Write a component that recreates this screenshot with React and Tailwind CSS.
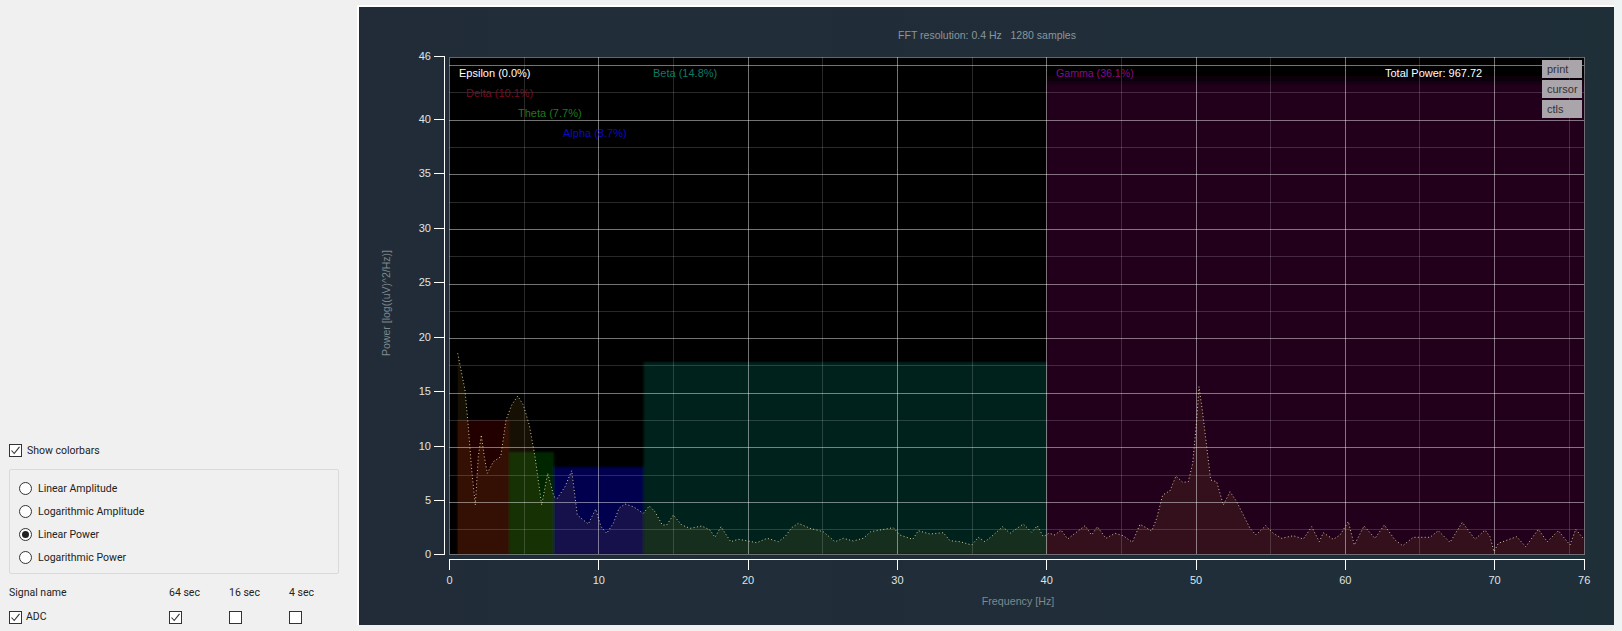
import React from 'react';

// curve samples read off the plot, as x,y pairs in page pixels
const fromCrop = (ox, oy, pts) => pts.map(([x, y]) => [ox + x / 3, oy + y / 3]);

const curve = [
  ...fromCrop(370, 340, [[263,40],[285,150],[295,260],[305,390],[316,495],[325,350],[334,285],[343,350],[352,400],[370,365],[392,350],[408,240],[425,195],[443,168],[460,195],[478,255],[495,350],[515,495],[533,400],[552,470],[562,475],[585,440],[605,392],[622,525],[640,540],[655,552],[677,507],[693,560],[710,580],[730,550],[747,505],[765,492],[790,500],[820,520],[838,498],[855,515],[877,555]]),
  ...fromCrop(660, 480, [[20,135],[40,105],[65,135],[90,145],[125,138],[150,150],[165,172],[183,140],[212,185],[235,178],[260,182],[290,188],[322,175],[355,185],[375,170],[395,143],[415,130],[450,145],[490,155],[525,185],[550,175],[580,183],[610,175],[632,155],[660,150],[700,143],[720,165],[758,178],[775,152],[810,162],[850,158],[870,182],[900,185],[935,195],[955,172],[975,185],[1000,165],[1028,140]]),
  ...fromCrop(1000, 370, [[30,490],[70,462],[95,487],[112,467],[130,500],[147,490],[165,495],[183,480],[203,507],[225,490],[255,467],[275,495],[292,470],[318,505],[345,490],[370,497],[397,517],[420,463],[455,483],[470,445],[488,375],[510,362],[528,318],[548,337],[565,335],[578,280],[590,150],[597,50],[607,120],[620,230],[632,330],[650,335],[670,405],[690,365],[710,395],[750,475],[768,495],[797,467],[820,490],[845,505],[880,497]]),
  ...fromCrop(1290, 480, [[40,177],[65,140],[88,185],[100,158],[130,178],[150,165],[175,125],[193,195],[222,138],[255,175],[283,135],[315,180],[338,197],[370,172],[420,172],[445,152],[480,187],[517,127],[555,178],[585,150],[600,170],[612,215],[625,190],[680,170],[707,200],[745,148],[772,185],[805,152],[840,195],[857,148],[882,178]]),
];

const linePts = curve.map((p) => p.map((n) => n.toFixed(1)).join(',')).join(' ');
const areaPts = `${curve[0][0].toFixed(1)},554 ${linePts} ${curve[curve.length - 1][0].toFixed(1)},554`;

const crisp = (n) => Math.floor(n) + 0.5;
const fx = (hz) => 449.5 + hz * 14.93;
const gridY = (v) => crisp(557 - 10.92 * v);
const tickY = (v) => (v === 0 ? 554.5 : v === 46 ? 56.5 : crisp(555.5 - 10.91 * v));

const bands = [
  { from: 0.5, to: 4, top: 420, fill: '#240300' },
  { from: 4, to: 7, top: 452, fill: '#002600' },
  { from: 7, to: 13, top: 467, fill: '#000050' },
  { from: 13, to: 40, top: 362, fill: '#00201c' },
  { from: 40, to: 76, top: 74, fill: 'url(#gammaFade)' },
];

const labels = [
  { x: 459, y: 77, text: 'Epsilon (0.0%)', fill: '#ffffff' },
  { x: 466, y: 97, text: 'Delta (10.1%)', fill: '#7a0a24' },
  { x: 518, y: 117, text: 'Theta (7.7%)', fill: '#1f7a1a' },
  { x: 563, y: 137, text: 'Alpha (8.7%)', fill: '#0808d0' },
  { x: 653, y: 77, text: 'Beta (14.8%)', fill: '#0f7a63' },
  { x: 1056, y: 77, text: 'Gamma (36.1%)', fill: '#8a0a8a', size: 10.6 },
  { x: 1385, y: 77, text: 'Total Power: 967.72', fill: '#ffffff' },
];

const yTicks = [0, 5, 10, 15, 20, 25, 30, 35, 40, 46];
const xTicks = [0, 10, 20, 30, 40, 50, 60, 70, 76];

function Spectrum() {
  const hMajor = [5, 10, 15, 20, 25, 30, 35, 40, 45];
  const hMinor = [2.5, 7.5, 12.5, 17.5, 22.5, 27.5, 32.5, 37.5, 42.5];
  const vMajor = [10, 20, 30, 40, 50, 60, 70];
  const vMinor = [5, 15, 25, 35, 45, 55, 65, 75];

  return (
    <svg width="1255" height="618" viewBox="359 7 1255 618" className="block" fontFamily="'Liberation Sans', sans-serif">
      <defs>
        <filter id="soft" x="-5%" y="-5%" width="110%" height="110%">
          <feGaussianBlur stdDeviation="1.2" />
        </filter>
        <linearGradient id="gammaFade" gradientUnits="userSpaceOnUse" x1="0" x2="0" y1="74" y2="86">
          <stop offset="0" stopColor="#000000" />
          <stop offset="1" stopColor="#20001c" />
        </linearGradient>
      </defs>

      <text x="987" y="39" fontSize="10.5" fill="#8a969c" textAnchor="middle" xmlSpace="preserve">
        FFT resolution: 0.4 Hz   1280 samples
      </text>

      <rect x="449" y="57" width="1135.5" height="497.5" fill="#000000" />
      <g filter="url(#soft)">
        {bands.map((b) => (
          <rect key={b.from} x={fx(b.from)} y={b.top} width={fx(b.to) - fx(b.from)} height={554 - b.top} fill={b.fill} />
        ))}
      </g>
      <polygon points={areaPts} fill="rgb(242,175,40)" fillOpacity="0.09" />

      {hMinor.map((v) => (
        <line key={v} x1="449" x2="1584" y1={gridY(v)} y2={gridY(v)} stroke="#ffffff" strokeOpacity="0.16" />
      ))}
      {vMinor.map((v) => (
        <line key={v} x1={crisp(fx(v))} x2={crisp(fx(v))} y1="57" y2="554" stroke="#ffffff" strokeOpacity="0.16" />
      ))}
      {hMajor.map((v) => (
        <line key={v} x1="449" x2="1584" y1={gridY(v)} y2={gridY(v)} stroke="#ffffff" strokeOpacity="0.45" />
      ))}
      {vMajor.map((v) => (
        <line key={v} x1={crisp(fx(v))} x2={crisp(fx(v))} y1="57" y2="554" stroke="#ffffff" strokeOpacity="0.45" />
      ))}
      <rect x="449.5" y="57.5" width="1135" height="497" fill="none" stroke="#ffffff" strokeOpacity="0.4" />

      <polyline points={linePts} fill="none" stroke="#efe9b4" strokeOpacity="0.85" strokeWidth="1" strokeDasharray="1 2.4" />

      {labels.map((l) => (
        <text key={l.text} x={l.x} y={l.y} fontSize={l.size ?? 11} fill={l.fill}>
          {l.text}
        </text>
      ))}

      {/* y axis */}
      <line x1="444.5" x2="444.5" y1="56" y2="555" stroke="#ffffff" />
      {yTicks.map((v) => (
        <g key={v}>
          <line x1="434" x2="444" y1={tickY(v)} y2={tickY(v)} stroke="#ffffff" />
          <text x="431" y={tickY(v) + 3.5} fontSize="11" fill="#dfe4e6" textAnchor="end">
            {v}
          </text>
        </g>
      ))}

      {/* x axis */}
      <line x1="449" x2="1585" y1="559.5" y2="559.5" stroke="#ffffff" />
      {xTicks.map((v) => (
        <g key={v}>
          <line x1={crisp(fx(v))} x2={crisp(fx(v))} y1="560" y2="570" stroke="#ffffff" />
          <text x={fx(v)} y="584" fontSize="11" fill="#dfe4e6" textAnchor="middle">
            {v}
          </text>
        </g>
      ))}

      <text x="1018" y="605" fontSize="10.7" fill="#7d898e" textAnchor="middle">
        Frequency [Hz]
      </text>
      <text transform="translate(390 303) rotate(-90)" fontSize="10.5" fill="#7d898e" textAnchor="middle">
        Power [log((uV)^2/Hz)]
      </text>
    </svg>
  );
}

function Checkbox({ checked }) {
  return (
    <span className="flex h-[13px] w-[13px] shrink-0 items-center justify-center border border-[#333333] bg-white">
      {checked && (
        <svg width="11" height="11" viewBox="0 0 11 11" fill="none" stroke="#333333" strokeWidth="1.1">
          <path d="M1.5 5.5 L4.2 8.5 L9.5 1.8" />
        </svg>
      )}
    </span>
  );
}

function Radio({ label, checked }) {
  return (
    <div className="flex h-[13px] items-center gap-[6px]">
      <span className="flex h-[13px] w-[13px] shrink-0 items-center justify-center rounded-full border border-[#333333] bg-white">
        {checked && <span className="h-[7px] w-[7px] rounded-full bg-[#222222]" />}
      </span>
      <span>{label}</span>
    </div>
  );
}

export default function App() {
  return (
    <div className="flex h-[631px] w-[1622px] overflow-hidden bg-[#f0f0f0] font-['Roboto',sans-serif] text-[10.5px] text-[#222222]">
      <aside className="flex w-[357px] shrink-0 flex-col justify-end pb-[6px] pl-[9px]">
        <label className="flex items-center gap-[5px]">
          <Checkbox checked />
          <span>Show colorbars</span>
        </label>
        <div className="mt-[11px] flex h-[105px] w-[330px] flex-col gap-[10px] rounded-[2px] border border-[#dadada] pl-[9px] pt-[12px]">
          <Radio label="Linear Amplitude" />
          <Radio label="Logarithmic Amplitude" />
          <Radio label="Linear Power" checked />
          <Radio label="Logarithmic Power" />
        </div>
        <div className="mt-[11px] flex h-[16px] items-center">
          <span className="w-[160px]">Signal name</span>
          <span className="w-[60px]">64 sec</span>
          <span className="w-[60px]">16 sec</span>
          <span>4 sec</span>
        </div>
        <div className="mt-[8px] flex items-center">
          <label className="flex w-[160px] items-center gap-[4px]">
            <Checkbox checked />
            <span>ADC</span>
          </label>
          <span className="w-[60px]">
            <Checkbox checked />
          </span>
          <span className="w-[60px]">
            <Checkbox />
          </span>
          <Checkbox />
        </div>
      </aside>

      <main className="relative mt-[5px] h-[620px] w-[1257px] border-l-2 border-t-2 border-white bg-linear-to-r from-[#212c38] to-[#1f2f38]">
        <Spectrum />
        <div className="absolute right-[32px] top-[53px] flex w-[40px] flex-col gap-[2px] font-['Liberation_Sans',sans-serif]">
          {['print', 'cursor', 'ctls'].map((name) => (
            <button key={name} className="h-[18px] bg-[#aaa5ab] pl-[5px] text-left text-[11px] leading-[18px] text-[#333333]">
              {name}
            </button>
          ))}
        </div>
      </main>
      <div className="flex-1 bg-[#eef3f3]" />
    </div>
  );
}
